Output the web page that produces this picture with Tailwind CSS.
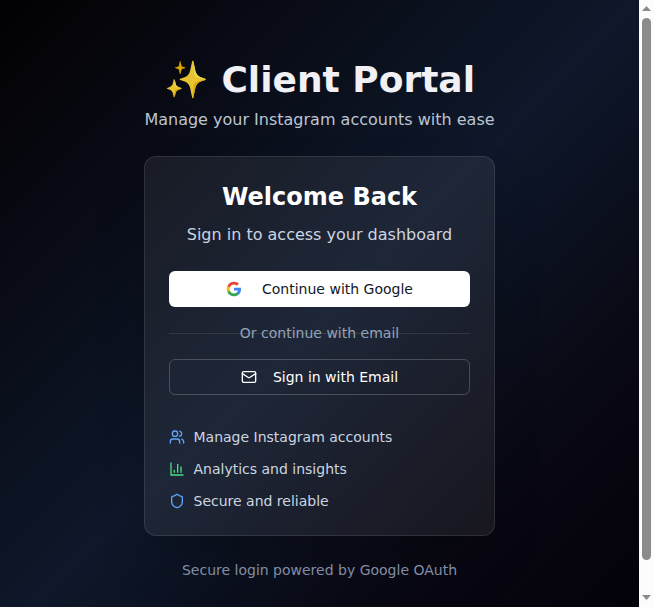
<!DOCTYPE html>
<html lang="en">
<head>
<meta charset="utf-8">
<title>Client Portal</title>
<script src="https://cdn.jsdelivr.net/npm/@tailwindcss/browser@4"></script>
</head>
<body class="h-[607px] overflow-hidden flex font-['DejaVu_Sans',sans-serif] bg-black">
<main class="w-[639px] h-[607px] shrink-0 flex flex-col items-center pt-[60px] bg-[linear-gradient(135deg,#010103_0%,#07070f_15%,#0e182a_50%,#090914_75%,#030008_100%)] bg-[length:100%_640px] bg-no-repeat">
  <header class="text-center mb-6">
    <h1 class="text-4xl leading-10 font-bold text-[#f1f0f5] mb-2 whitespace-nowrap"><span class="font-['Noto_Color_Emoji'] opacity-90">✨</span> Client Portal</h1>
    <p class="text-base text-[#bcc4d2] whitespace-nowrap">Manage your Instagram accounts with ease</p>
  </header>
  <section class="w-[351px] h-[380px] rounded-xl border border-white/10 bg-white/[0.065] p-6 shadow-2xl">
    <div class="text-center mb-6">
      <h2 class="text-2xl leading-8 font-bold text-white mb-[10px]">Welcome Back</h2>
      <p class="text-base text-[#cbd5e1]">Sign in to access your dashboard</p>
    </div>
    <button class="w-full h-9 rounded-md bg-white text-[#111827] text-sm flex items-center justify-center gap-5">
      <svg class="size-4" viewBox="0 0 24 24"><path fill="#4285F4" d="M22.56 12.25c0-.78-.07-1.53-.2-2.25H12v4.26h5.92c-.26 1.37-1.04 2.53-2.21 3.31v2.77h3.57c2.08-1.92 3.28-4.74 3.28-8.09z"/><path fill="#34A853" d="M12 23c2.97 0 5.46-.98 7.28-2.66l-3.57-2.77c-.98.66-2.23 1.06-3.71 1.06-2.86 0-5.29-1.93-6.16-4.53H2.18v2.84C3.99 20.53 7.7 23 12 23z"/><path fill="#FBBC05" d="M5.84 14.09c-.22-.66-.35-1.36-.35-2.09s.13-1.43.35-2.09V7.07H2.18C1.43 8.55 1 10.22 1 12s.43 3.45 1.18 4.93l3.66-2.84z"/><path fill="#EA4335" d="M12 5.38c1.62 0 3.06.56 4.21 1.64l3.15-3.15C17.45 2.09 14.97 1 12 1 7.7 1 3.99 3.47 2.18 7.07l3.66 2.84c.87-2.6 3.3-4.53 6.16-4.53z"/></svg>
      Continue with Google
    </button>
    <div class="grid h-5 my-4 items-center text-sm">
      <div class="col-start-1 row-start-1 h-px bg-white/10"></div>
      <span class="col-start-1 row-start-1 text-center text-[#94a3b8]">Or continue with email</span>
    </div>
    <button class="w-full h-9 rounded-md border border-white/20 text-white text-sm flex items-center justify-center gap-4">
      <svg class="size-4" viewBox="0 0 24 24" fill="none" stroke="currentColor" stroke-width="2" stroke-linecap="round" stroke-linejoin="round"><rect width="20" height="16" x="2" y="4" rx="2"/><path d="m22 7-8.97 5.7a1.94 1.94 0 0 1-2.06 0L2 7"/></svg>
      Sign in with Email
    </button>
    <ul class="mt-8 flex flex-col gap-3 text-sm text-[#cbd5e1]">
      <li class="flex items-center gap-[8.5px] h-5"><svg class="size-4 text-[#60a5fa]" viewBox="0 0 24 24" fill="none" stroke="currentColor" stroke-width="2" stroke-linecap="round" stroke-linejoin="round"><path d="M16 21v-2a4 4 0 0 0-4-4H6a4 4 0 0 0-4 4v2"/><circle cx="9" cy="7" r="4"/><path d="M22 21v-2a4 4 0 0 0-3-3.87"/><path d="M16 3.13a4 4 0 0 1 0 7.75"/></svg>Manage Instagram accounts</li>
      <li class="flex items-center gap-[8.5px] h-5"><svg class="size-4 text-[#4ade80]" viewBox="0 0 24 24" fill="none" stroke="currentColor" stroke-width="2" stroke-linecap="round" stroke-linejoin="round"><path d="M3 3v18h18"/><path d="M18 17V9"/><path d="M13 17V5"/><path d="M8 17v-3"/></svg>Analytics and insights</li>
      <li class="flex items-center gap-[8.5px] h-5"><svg class="size-4 text-[#60a5fa]" viewBox="0 0 24 24" fill="none" stroke="currentColor" stroke-width="2" stroke-linecap="round" stroke-linejoin="round"><path d="M20 13c0 5-3.5 7.5-7.66 8.95a1 1 0 0 1-.67-.01C7.5 20.5 4 18 4 13V6a1 1 0 0 1 1-1c2 0 4.5-1.2 6.24-2.72a1.17 1.17 0 0 1 1.52 0C14.51 3.81 17 5 19 5a1 1 0 0 1 1 1z"/></svg>Secure and reliable</li>
    </ul>
  </section>
  <p class="mt-6 text-sm text-[#828da5]">Secure login powered by Google OAuth</p>
</main>
<aside class="w-[15px] h-[607px] bg-[#fcfcfc] flex flex-col items-center pt-[6px] pb-[7px]">
  <svg class="w-[9px] h-[5px] shrink-0" viewBox="0 0 9 5"><path fill="#8b8b8b" d="M4.5 0 9 5H0z"/></svg>
  <div class="w-[9px] h-[542px] mt-[7px] rounded-full bg-[#8b8b8b]"></div>
  <svg class="w-[9px] h-[5px] mt-auto shrink-0" viewBox="0 0 9 5"><path fill="#8b8b8b" d="M0 0h9L4.5 5z"/></svg>
</aside>
</body>
</html>
